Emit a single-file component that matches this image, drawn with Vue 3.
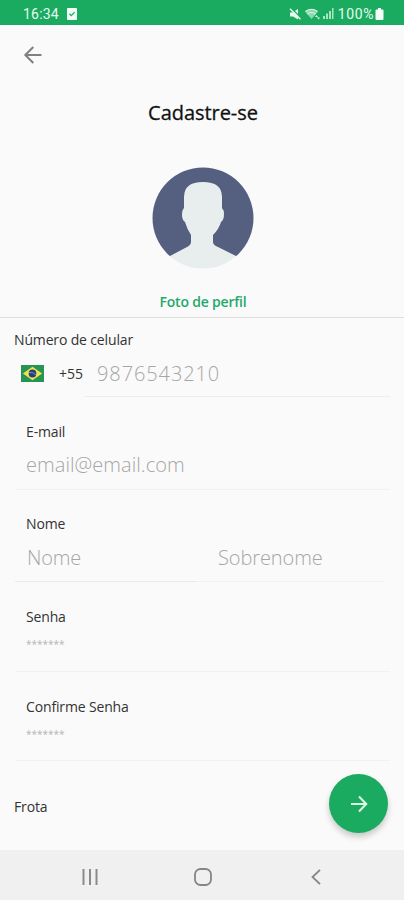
<template>
  <div class="screen">
    <div class="status-bar">
      <span class="time">16:34</span>
      <svg class="check" width="10" height="12" viewBox="0 0 10 12">
        <rect width="10" height="12" rx="1" fill="#f2fff7"/>
        <path d="M2.5 5.8l1.8 1.8 3.3-3.5" fill="none" stroke="#1aab60" stroke-width="1.3"/>
      </svg>
      <div class="status-icons">
        <svg width="12" height="12" viewBox="0 0 12 12">
          <path d="M1 4.500h2.500L9 1v10.500L4 8.500H1z" fill="#e6fbee"/>
          <path d="M2 0l9.500 9.500" stroke="#1aab60" stroke-width="1.500"/>
          <path d="M1 .8l10.500 10.500" stroke="#e6fbee" stroke-width="1.500"/>
        </svg>
        <svg class="wifi" width="15" height="12" viewBox="0 0 15 12">
          <path d="M0 3.500Q6.500-1.500 13 3.500L6.500 11z" fill="#8fd9b0"/>
          <path d="M.5 3.500Q6.500-1 12.500 3.500M2.500 6Q6.500 3 10.500 6" fill="none" stroke="#d3f5e0" stroke-width="1.200"/>
          <path d="M10 9l1.500-2L13 9zM12 9.500h3l-1.500 2z" fill="#e6fbee"/>
        </svg>
        <svg class="signal" width="11" height="11" viewBox="0 0 11 11" fill="#a9e4c2">
          <rect x="0" y="8" width="2" height="3"/>
          <rect x="3" y="5.500" width="2" height="5.500"/>
          <rect x="6" y="3" width="2" height="8"/>
          <rect x="9" y="0" width="1.500" height="11"/>
        </svg>
        <span class="percent">100%</span>
        <svg width="9" height="12" viewBox="0 0 9 12">
          <path d="M3 0h3v1.500h1.500q1 0 1 1V11q0 1-1 1h-6q-1 0-1-1V2.500q0-1 1-1H3z" fill="#f2fff7"/>
        </svg>
      </div>
    </div>

    <header class="header">
      <button class="back" type="button" aria-label="Voltar">
        <svg width="20" height="20" viewBox="0 0 20 20">
          <path d="M18.500 10H2.500M10.300 2L2.300 10l8 8" fill="none" stroke="#808080" stroke-width="2"/>
        </svg>
      </button>
      <h1>Cadastre-se</h1>
      <svg class="avatar" width="102" height="102" viewBox="0 0 102 102">
        <defs>
          <clipPath id="avatar-clip"><circle cx="51" cy="51" r="50.500"/></clipPath>
        </defs>
        <g clip-path="url(#avatar-clip)">
          <path d="M0 0H102V89H0z" fill="#556080"/>
          <path d="M39 75Q39 78 35 80L18 89 10 102H92L84 89 66 80Q61 78 61 75V68Q67 62 69 55Q72 53 72 47Q72 43 70 41V30Q70 15 51 15Q32 15 32 30V41Q30 43 30 48Q30 53 33 55Q35 62 39 68Z" fill="#e7eeed"/>
        </g>
      </svg>
      <a class="photo">Foto de perfil</a>
    </header>

    <form class="form" @submit.prevent>
      <div class="field phone">
        <label for="phone">Número de celular</label>
        <div class="phone-row">
          <svg class="flag" width="23" height="17" viewBox="0 0 24 17" preserveAspectRatio="none">
            <rect width="24" height="17" fill="#269454"/>
            <path d="M12 1.800L22 8.500 12 15.200 2 8.500z" fill="#f2e34b"/>
            <circle cx="12" cy="8.500" r="4" fill="#243f82"/>
            <path d="M8.300 7.500q4-.7 7.300 2.300" fill="none" stroke="#9fb6cc" stroke-width=".7"/>
          </svg>
          <span class="code">+55</span>
          <input id="phone" v-model="form.phone" class="phone-input" type="tel" placeholder="9876543210">
        </div>
      </div>

      <div class="field email">
        <label for="email">E-mail</label>
        <input id="email" v-model="form.email" class="email-input" placeholder="email@email.com">
      </div>

      <div class="field name">
        <label for="name">Nome</label>
        <div class="name-row">
          <input id="name" v-model="form.name" class="first-name" placeholder="Nome">
          <input v-model="form.surname" class="last-name" placeholder="Sobrenome">
        </div>
      </div>

      <div class="field password">
        <label for="password">Senha</label>
        <input id="password" v-model="form.password" type="password" placeholder="*******">
      </div>

      <div class="field password confirm">
        <label for="confirm">Confirme Senha</label>
        <input id="confirm" v-model="form.confirm" type="password" placeholder="*******">
      </div>

      <div class="fleet">
        <label>Frota</label>
        <button class="next" type="submit" aria-label="Continuar">
          <svg width="18" height="18" viewBox="0 0 18 18">
            <path d="M1 9h15M9 1.500L16.300 9 9 16.500" fill="none" stroke="#dcfbe7" stroke-width="2"/>
          </svg>
        </button>
      </div>
    </form>

    <nav class="nav-bar">
      <svg width="16" height="16" viewBox="0 0 16 16" fill="none" stroke="#8b8b8b" stroke-width="2">
        <path d="M1.500 0v16M8 0v16M14.500 0v16"/>
      </svg>
      <svg width="18" height="18" viewBox="0 0 18 18" fill="none" stroke="#858585" stroke-width="1.800">
        <rect x="1" y="1" width="16" height="16" rx="5.500"/>
      </svg>
      <svg width="10" height="16" viewBox="0 0 10 16" fill="none" stroke="#858585" stroke-width="1.800">
        <path d="M9 .8L1.500 8 9 15.200"/>
      </svg>
    </nav>
  </div>
</template>

<script setup>
import {reactive} from 'vue';

const form = reactive({
  phone: '',
  email: '',
  name: '',
  surname: '',
  password: '',
  confirm: ''
});
</script>

<style>
body {
  margin: 0;
  background: #fafafa;
}
</style>

<style scoped>
.screen {
  width: 404px;
  height: 900px;
  display: flex;
  flex-direction: column;
  overflow: hidden;
  background: #fafafa;
  color: #333;
  font-family: "Open Sans", "Noto Sans", sans-serif;
}

svg {
  display: block;
  flex: none;
}

.status-bar {
  height: 25px;
  flex: none;
  box-sizing: border-box;
  display: flex;
  align-items: center;
  padding: 2px 20px 0 23px;
  background: #1aab60;
  color: #e6fbee;
  font-family: Roboto, sans-serif;
  font-size: 14px;
}

.time {
  width: 44px;
  letter-spacing: 0.2px;
}

.status-icons {
  display: flex;
  align-items: center;
  margin-left: auto;
}

.wifi {
  margin-left: 4px;
}

.signal {
  margin-left: 3px;
}

.percent {
  margin: 0 1px 0 4px;
  letter-spacing: 0.6px;
}

.header {
  height: 293px;
  flex: none;
  box-sizing: border-box;
  display: flex;
  flex-direction: column;
  align-items: center;
  border-bottom: 1px solid #dedede;
}

.back {
  align-self: flex-start;
  margin: 20px 0 0 23px;
  padding: 0;
  border: none;
  background: none;
}

h1 {
  margin: 34px 0 0 2px;
  font-size: 20px;
  line-height: 28px;
  font-weight: 500;
  letter-spacing: -0.05px;
  color: #111;
  -webkit-text-stroke: 0.3px #111;
}

.avatar {
  margin: 40px 0 0 1px;
}

.photo {
  margin: 23px 0 0 2px;
  font-size: 14px;
  line-height: 20px;
  font-weight: 600;
  letter-spacing: -0.2px;
  color: #24a96a;
}

.form {
  flex: 1;
  display: flex;
  flex-direction: column;
}

.field {
  box-sizing: border-box;
  display: flex;
  flex-direction: column;
  margin: 0 14px 0 15px;
  padding-left: 11px;
  border-bottom: 1px solid #f1f1f1;
}

label {
  font-size: 14px;
  line-height: 20px;
  letter-spacing: -0.15px;
  white-space: nowrap;
}

input {
  min-width: 0;
  height: 30px;
  padding: 0;
  border: none;
  outline: none;
  background: none;
  font-family: inherit;
  font-size: 20px;
  font-weight: 300;
  color: #333;
}

input::placeholder {
  color: #a6a6a6;
  opacity: 1;
}

.phone {
  height: 79px;
  margin: 0 14px 0 0;
  padding: 12px 0 0 14px;
  border: none;
}

.phone-row {
  display: flex;
  align-items: center;
  height: 47px;
  padding-left: 7px;
}

.code {
  width: 25px;
  margin-left: 15px;
  font-size: 14px;
}

.phone-input {
  flex: 1;
  height: 46px;
  padding-left: 13px;
  border-bottom: 1px solid #ededed;
  letter-spacing: 0.9px;
}

.email {
  height: 93px;
  padding-top: 25px;
}

.email-input {
  margin-top: 7px;
  letter-spacing: 0.05px;
}

.name {
  height: 92px;
  margin-right: 20px;
  padding: 24px 0 0;
  border: none;
}

.name label {
  padding-left: 11px;
}

.name-row {
  display: flex;
  height: 48px;
}

.first-name {
  width: 181px;
  height: 48px;
  padding-left: 12px;
  box-sizing: border-box;
  border-bottom: 1px solid #eaeaea;
  letter-spacing: -0.2px;
}

.last-name {
  flex: 1;
  height: 47px;
  padding-left: 22px;
  border-bottom: 1px solid #f1f1f1;
  letter-spacing: -0.1px;
}

.password {
  height: 90px;
  padding-top: 25px;
}

.password input {
  margin-top: 2px;
  font-size: 10px;
  font-weight: 400;
}

.password input::placeholder {
  color: #b4b4b4;
}

.confirm {
  height: 89px;
  padding-top: 25px;
}

.fleet {
  flex: 1;
  display: flex;
  align-items: flex-start;
  justify-content: space-between;
  padding: 13px 16px 0 14px;
}

.fleet label {
  margin-top: 23px;
}

.next {
  width: 59px;
  height: 59px;
  display: flex;
  align-items: center;
  justify-content: center;
  padding: 0;
  border: none;
  border-radius: 50%;
  background: #1aab60;
  box-shadow: 0 4px 6px rgba(0, 0, 0, 0.2);
}

.nav-bar {
  height: 50px;
  flex: none;
  box-sizing: border-box;
  display: flex;
  align-items: center;
  gap: 96px;
  padding: 3px 0 0 82px;
  background: #f0f0f0;
}

.nav-bar svg:last-child {
  margin-left: 3px;
}
</style>
